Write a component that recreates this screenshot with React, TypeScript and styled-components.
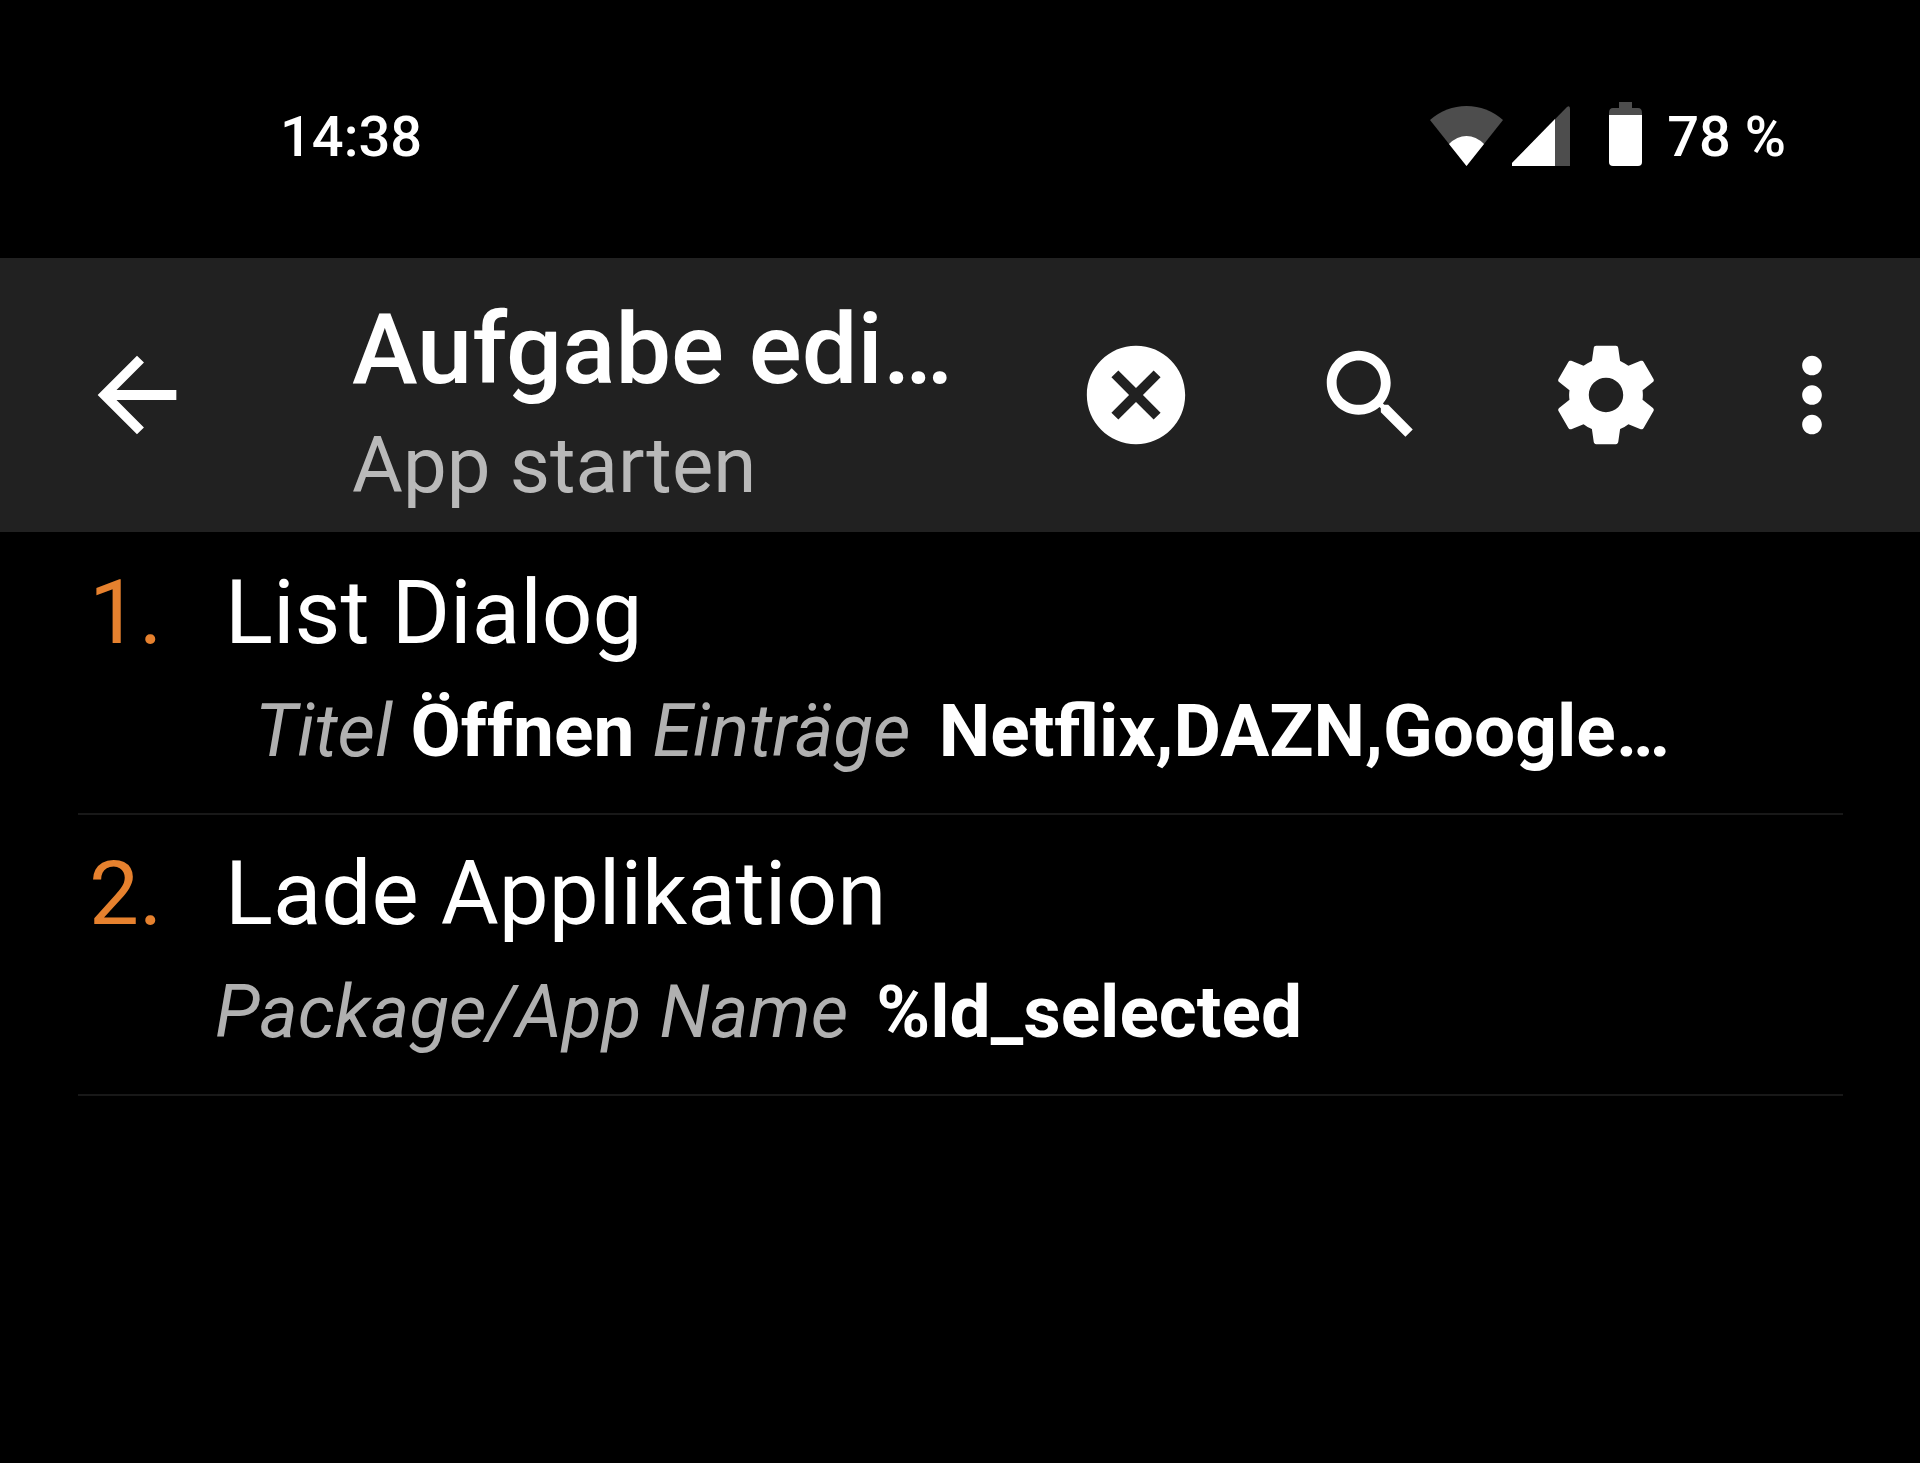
import React from "react";
import styled, { createGlobalStyle } from "styled-components";

const GlobalStyle = createGlobalStyle`
  *, *::before, *::after { box-sizing: border-box; }
  html { background: #000; }
  body {
    margin: 0;
    background: #000;
    color: #fff;
    font-family: Roboto, "Noto Sans", sans-serif;
  }
  h1, h2, p, ol { margin: 0; padding: 0; font-weight: 400; }
`;

const Screen = styled.div`
  min-height: 100vh;
  background: #000;
`;

const StatusBar = styled.div`
  display: flex;
  align-items: flex-end;
  justify-content: space-between;
  padding: 102px 134px 92px 280px;
`;

const StatusText = styled.span`
  font-size: 56px;
  line-height: 58px;
  font-weight: 500;
  white-space: nowrap;
`;

const StatusIcons = styled.div`
  display: flex;
  align-items: flex-end;
`;

const StatusIcon = styled.svg<{ $gap: number }>`
  display: block;
  height: 64px;
  margin-right: ${(p) => p.$gap}px;
`;

const AppBar = styled.header`
  display: flex;
  align-items: stretch;
  min-height: 274px;
  padding-right: 19px;
  background: #212121;
`;

const IconButton = styled.button<{ $width: number }>`
  display: flex;
  flex: none;
  align-items: center;
  justify-content: center;
  width: ${(p) => p.$width}px;
  padding: 0;
  border: 0;
  background: transparent;
  color: #fff;
  cursor: pointer;
`;

const Glyph = styled.svg`
  display: block;
  width: 118px;
  height: 118px;
  fill: currentColor;
`;

const Titles = styled.div`
  display: flex;
  flex: 1;
  flex-direction: column;
  gap: 12px;
  min-width: 0;
  padding: 33px 0 0 78px;
`;

const Title = styled.h1`
  && { font-weight: 500; }
  font-size: 99px;
  line-height: 116px;
  white-space: nowrap;
`;

const Subtitle = styled.p`
  color: #b9b9b9;
  font-size: 78px;
  line-height: 94px;
  white-space: nowrap;
`;

const ActionList = styled.ol`
  && { padding: 2px 77px 0 78px; }
  list-style: none;
`;

const ActionRow = styled.li`
  display: grid;
  grid-template-columns: 136px 1fr;
  row-gap: 21px;
  padding: 25px 0 39px 11px;
  border-bottom: 2px solid #181818;
`;

const Step = styled.span`
  color: #e6812e;
  font-size: 89px;
  line-height: 108px;
`;

const ActionName = styled.h2`
  font-size: 89px;
  line-height: 108px;
  white-space: nowrap;
`;

const Details = styled.p<{ $indent: number }>`
  grid-column: 1 / -1;
  && { padding-left: ${(p) => p.$indent}px; }
  font-size: 73px;
  line-height: 86px;
  white-space: pre;
`;

const Label = styled.em`
  color: #b0b0b0;
  font-style: italic;
`;

const Value = styled.strong<{ $spaced?: boolean }>`
  margin-left: ${(p) => (p.$spaced ? 10 : 0)}px;
  font-weight: 700;
`;

type Param = { label: string; value: string; spaced?: boolean };
type Action = { name: string; indent: number; params: Param[] };

const actions: Action[] = [
  {
    name: "List Dialog",
    indent: 166,
    params: [
      { label: "Titel", value: "Öffnen" },
      { label: "Einträge", value: "Netflix,DAZN,Google…", spaced: true },
    ],
  },
  {
    name: "Lade Applikation",
    indent: 126,
    params: [{ label: "Package/App Name", value: "%ld_selected", spaced: true }],
  },
];

const toolbar = [
  {
    label: "Abbrechen",
    width: 235,
    path: "M12 2C6.47 2 2 6.47 2 12s4.47 10 10 10 10-4.47 10-10S17.53 2 12 2zm5 13.59L15.59 17 12 13.41 8.41 17 7 15.59 10.59 12 7 8.41 8.41 7 12 10.59 15.59 7 17 8.41 13.41 12 17 15.59z",
  },
  {
    label: "Suchen",
    width: 235,
    path: "M15.5 14h-.79l-.28-.27C15.41 12.59 16 11.11 16 9.5 16 5.91 13.09 3 9.5 3S3 5.91 3 9.5 5.91 16 9.5 16c1.61 0 3.09-.59 4.23-1.57l.27.28v.79l5 4.99L20.49 19l-4.99-5zm-6 0C7.01 14 5 11.99 5 9.5S7.01 5 9.5 5 14 7.01 14 9.5 11.99 14 9.5 14z",
  },
  {
    label: "Einstellungen",
    width: 235,
    path: "M19.43 12.98c.04-.32.07-.64.07-.98s-.03-.66-.07-.98l2.11-1.65c.19-.15.24-.42.12-.64l-2-3.46c-.12-.22-.39-.3-.61-.22l-2.49 1c-.52-.4-1.08-.73-1.69-.98l-.38-2.65C14.46 2.18 14.25 2 14 2h-4c-.25 0-.46.18-.49.42l-.38 2.65c-.61.25-1.17.59-1.69.98l-2.49-1c-.23-.09-.49 0-.61.22l-2 3.46c-.13.22-.07.49.12.64l2.11 1.65c-.04.32-.07.65-.07.98s.03.66.07.98l-2.11 1.65c-.19.15-.24.42-.12.64l2 3.46c.12.22.39.3.61.22l2.49-1c.52.4 1.08.73 1.69.98l.38 2.65c.03.24.24.42.49.42h4c.25 0 .46-.18.49-.42l.38-2.65c.61-.25 1.17-.59 1.69-.98l2.49 1c.23.09.49 0 .61-.22l2-3.46c.12-.22.07-.49-.12-.64l-2.11-1.65zM12 15.5c-1.93 0-3.5-1.57-3.5-3.5s1.57-3.5 3.5-3.5 3.5 1.57 3.5 3.5-1.57 3.5-3.5 3.5z",
  },
  {
    label: "Weitere Optionen",
    width: 178,
    path: "M12 8c1.1 0 2-.9 2-2s-.9-2-2-2-2 .9-2 2 .9 2 2 2zm0 2c-1.1 0-2 .9-2 2s.9 2 2 2 2-.9 2-2-.9-2-2-2zm0 6c-1.1 0-2 .9-2 2s.9 2 2 2 2-.9 2-2-.9-2-2-2z",
  },
];

export default function App() {
  return (
    <Screen>
      <GlobalStyle />
      <StatusBar>
        <StatusText>14:38</StatusText>
        <StatusIcons>
          <StatusIcon $gap={9} width={73} viewBox="0 0 73 64" aria-hidden="true">
            <path d="M36.500 64 L0 18 Q16 4 36.500 4 T73 18 Z" fill="#4d4d4d" />
            <path d="M36.500 64 L19 42 Q27 34 36.500 34 T54 42 Z" fill="#fff" />
          </StatusIcon>
          <StatusIcon $gap={39} width={58} viewBox="0 0 58 64" aria-hidden="true">
            <path d="M0 64 V61 L55 5 Q58 3 58 7 V64 Z" fill="#4d4d4d" />
            <path d="M0 64 V61 L43 17 V64 Z" fill="#fff" />
          </StatusIcon>
          <StatusIcon $gap={25} width={33} viewBox="0 0 33 64" aria-hidden="true">
            <path d="M10 0 H23 V6 H29 Q33 6 33 11 V14 H0 V11 Q0 6 4 6 H10 Z" fill="#4d4d4d" />
            <path d="M0 13 H33 V60 Q33 64 29 64 H4 Q0 64 0 60 Z" fill="#fff" />
          </StatusIcon>
          <StatusText>78 %</StatusText>
        </StatusIcons>
      </StatusBar>

      <AppBar>
        <IconButton $width={274} type="button" aria-label="Zurück">
          <Glyph viewBox="0 0 24 24" aria-hidden="true">
            <path d="M20 11H7.83l5.590-5.590L12 4l-8 8 8 8 1.410-1.410L7.830 13H20v-2z" />
          </Glyph>
        </IconButton>
        <Titles>
          <Title>Aufgabe edi…</Title>
          <Subtitle>App starten</Subtitle>
        </Titles>
        {toolbar.map((item) => (
          <IconButton key={item.label} $width={item.width} type="button" aria-label={item.label}>
            <Glyph viewBox="0 0 24 24" aria-hidden="true">
              <path d={item.path} />
            </Glyph>
          </IconButton>
        ))}
      </AppBar>

      <ActionList>
        {actions.map((action, i) => (
          <ActionRow key={action.name}>
            <Step>{i + 1}.</Step>
            <ActionName>{action.name}</ActionName>
            <Details $indent={action.indent}>
              {action.params.map((param, j) => (
                <React.Fragment key={param.label}>
                  {j > 0 && " "}
                  <Label>{param.label}</Label>{" "}
                  <Value $spaced={param.spaced}>{param.value}</Value>
                </React.Fragment>
              ))}
            </Details>
          </ActionRow>
        ))}
      </ActionList>
    </Screen>
  );
}
